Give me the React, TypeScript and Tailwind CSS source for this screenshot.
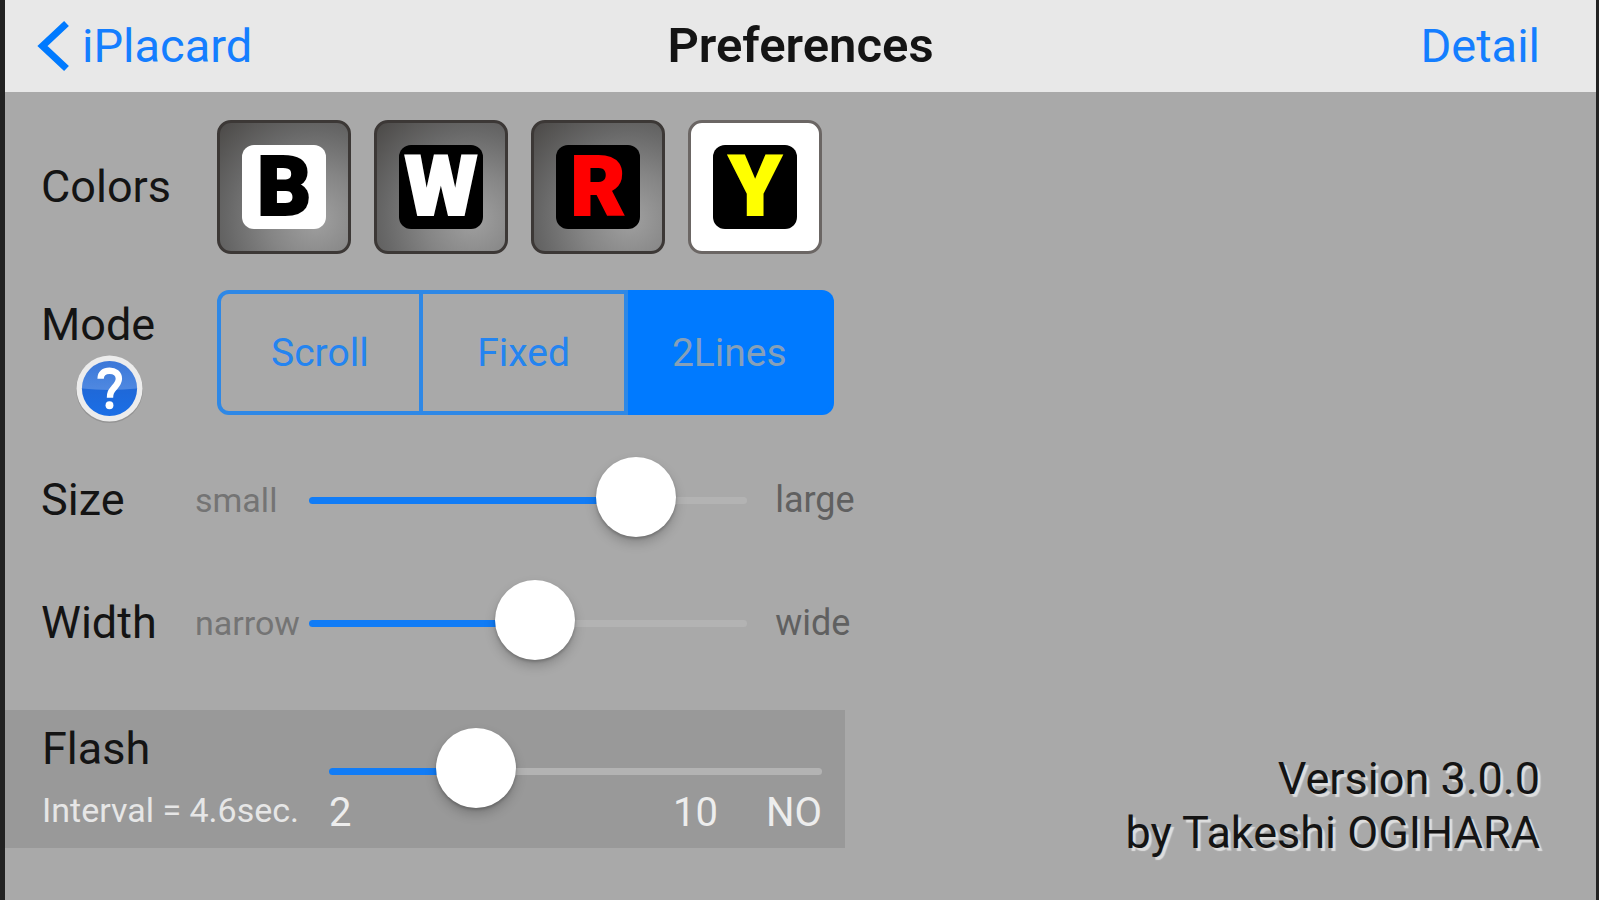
import { useState } from "react";
import type { CSSProperties } from "react";

const swatches = [
  { letter: "B", name: "Black", tile: "bg-white text-black" },
  { letter: "W", name: "White", tile: "bg-black text-white" },
  { letter: "R", name: "Red", tile: "bg-black text-[#ff0000]" },
  { letter: "Y", name: "Yellow", tile: "bg-black text-[#ffff00]" },
];

const modes = ["Scroll", "Fixed", "2Lines"];

type SliderProps = {
  id: string;
  label?: string;
  min: number;
  max: number;
  step: number;
  value: number;
  onChange: (value: number) => void;
};

function Slider({ id, label, min, max, step, value, onChange }: SliderProps) {
  const fill = ((value - min) / (max - min)) * 100;

  return (
    <input
      id={id}
      aria-label={label}
      type="range"
      min={min}
      max={max}
      step={step}
      value={value}
      onChange={(e) => onChange(Number(e.target.value))}
      style={{ "--fill": `${fill}%` } as CSSProperties}
      className="block h-10 w-full min-w-0 cursor-pointer appearance-none bg-transparent [&::-webkit-slider-runnable-track]:h-[7px] [&::-webkit-slider-runnable-track]:rounded-full [&::-webkit-slider-runnable-track]:bg-[linear-gradient(to_right,#117cf6_var(--fill),#b3b3b3_var(--fill))] [&::-webkit-slider-thumb]:-mt-10 [&::-webkit-slider-thumb]:size-20 [&::-webkit-slider-thumb]:appearance-none [&::-webkit-slider-thumb]:rounded-full [&::-webkit-slider-thumb]:bg-white [&::-webkit-slider-thumb]:shadow-[0_6px_12px_rgba(0,0,0,0.2),0_2px_3px_rgba(0,0,0,0.2)]"
    />
  );
}

function HelpIcon() {
  return (
    <svg viewBox="0 0 70 70" className="size-[69px]" aria-hidden="true">
      <defs>
        <linearGradient id="help-base" x1="0" y1="0" x2="0" y2="1">
          <stop offset="0" stopColor="#2f6fd6" />
          <stop offset="0.5" stopColor="#1f68d8" />
          <stop offset="1" stopColor="#1b6fe6" />
        </linearGradient>
        <linearGradient id="help-gloss" x1="0" y1="0" x2="0" y2="1">
          <stop offset="0" stopColor="#fff" stopOpacity="0.06" />
          <stop offset="1" stopColor="#fff" stopOpacity="0.22" />
        </linearGradient>
      </defs>
      <circle cx="35" cy="36" r="34" fill="#000" opacity="0.12" />
      <circle cx="35" cy="35" r="33.5" fill="#ececec" />
      <circle cx="35" cy="35" r="28" fill="url(#help-base)" />
      <path d="M7 35a28 28 0 0 1 56 0q-28 3-56 0z" fill="url(#help-gloss)" />
      <path
        d="M26 25c0-5.500 3.500-8 9-8s9.500 3 9.500 8c0 4-2.500 6.500-5 9.500-3 3.500-4 5-4 10"
        fill="none"
        stroke="#fff"
        strokeWidth="6.5"
      />
      <circle cx="35" cy="52" r="4" fill="#fff" />
    </svg>
  );
}

export default function App() {
  const [color, setColor] = useState("Y");
  const [mode, setMode] = useState("2Lines");
  const [size, setSize] = useState(80);
  const [width, setWidth] = useState(52);
  const [interval, setInterval] = useState(4.6);

  return (
    <div className="flex min-h-screen flex-col border-r-3 border-l-5 border-[#222222] bg-[#a9a9a9] font-['Roboto','Noto_Sans',sans-serif] text-[45px] leading-[54px] text-[#141414]">
      <header className="grid h-[92px] grid-cols-[1fr_auto_1fr] items-center bg-[#e8e8e8] px-8 text-[47px]">
        <a href="#" className="flex items-center gap-3 text-[#147eff]">
          <svg viewBox="0 0 33 52" className="h-[52px] w-[33px]" aria-hidden="true">
            <path d="M29.500 3.500 5.500 26l24 22.500" fill="none" stroke="#007aff" strokeWidth="7" />
          </svg>
          iPlacard
        </a>
        <h1 className="text-[49px] font-semibold">Preferences</h1>
        <a href="#" className="justify-self-end pr-6 text-[#147eff]">
          Detail
        </a>
      </header>

      <main className="flex flex-1 justify-between">
        <div className="w-[54%]">
          <section className="flex items-center pt-7 pl-9">
            <h2 className="w-44">Colors</h2>
            <div className="flex gap-[22px]">
              {swatches.map(({ letter, name, tile }) => (
                <button
                  key={letter}
                  type="button"
                  aria-label={name}
                  aria-pressed={color === letter}
                  onClick={() => setColor(letter)}
                  className={`flex size-[134px] items-center justify-center rounded-[14px] border-3 not-last:mr-px ${
                    color === letter
                      ? "border-[#6b6664] bg-white"
                      : "border-[#3c3836] bg-[radial-gradient(circle_at_75%_75%,#a0a0a0_0%,#858585_35%,#686868_65%,#4b4947_100%)]"
                  }`}
                >
                  <span
                    className={`flex size-[84px] items-center justify-center rounded-[12px] text-[84px] leading-[84px] font-black [-webkit-text-stroke:2px_currentColor] ${tile}`}
                  >
                    {letter}
                  </span>
                </button>
              ))}
            </div>
          </section>

          <section className="mt-9 flex items-start pr-[30px] pl-9">
            <div className="w-44 pt-2">
              <h2>Mode</h2>
              <button type="button" aria-label="About modes" className="mt-0.5 ml-[34px] block rounded-full">
                <HelpIcon />
              </button>
            </div>
            <div className="grid h-[125px] flex-1 grid-cols-3">
              {modes.map((item) => (
                <button
                  key={item}
                  type="button"
                  aria-pressed={mode === item}
                  onClick={() => setMode(item)}
                  className={`border-y-4 border-r-4 text-[39px] first:rounded-l-[12px] first:border-l-4 last:rounded-r-[12px] ${
                    mode === item
                      ? "border-[#007aff] bg-[#007aff] text-[#86a0b8]"
                      : "border-[#2e88e6] text-[#2484f0]"
                  }`}
                >
                  {item}
                </button>
              ))}
            </div>
          </section>

          <section className="mt-[37px] flex h-20 items-center pl-9">
            <label htmlFor="size" className="w-[154px]">
              Size
            </label>
            <span className="w-[114px] text-[34px] text-[#747474]">small</span>
            <div className="flex-1">
              <Slider id="size" min={0} max={100} step={1} value={size} onChange={setSize} />
            </div>
            <span className="w-[117px] pl-7 text-[36px] text-[#606060]">large</span>
          </section>

          <section className="mt-[43px] flex h-20 items-center pl-9">
            <label htmlFor="width" className="w-[154px]">
              Width
            </label>
            <span className="w-[114px] text-[34px] text-[#747474]">narrow</span>
            <div className="flex-1">
              <Slider id="width" min={0} max={100} step={1} value={width} onChange={setWidth} />
            </div>
            <span className="w-[117px] pl-7 text-[36px] text-[#606060]">wide</span>
          </section>

          <section className="mt-[47px] mr-[19px] flex h-[138px] bg-[#999999] pr-[23px] pl-[37px]">
            <div className="w-[287px] pt-3">
              <h2>Flash</h2>
              <p className="mt-3.5 text-[34px] leading-10 text-[#e6e6e6]">Interval = {interval.toFixed(1)}sec.</p>
            </div>
            <div className="flex-1 pt-[41px]">
              <Slider
                id="flash"
                label="Flash interval"
                min={2}
                max={12}
                step={0.2}
                value={interval}
                onChange={setInterval}
              />
              <div className="flex gap-12 text-[40px] leading-11 text-[#ededed]">
                <span className="mr-auto">2</span>
                <span>10</span>
                <span>NO</span>
              </div>
            </div>
          </section>
        </div>

        <p className="self-end pr-14 pb-10 text-right [text-shadow:3px_3px_1px_#dedede]">
          Version 3.0.0
          <br />
          by Takeshi OGIHARA
        </p>
      </main>
    </div>
  );
}
